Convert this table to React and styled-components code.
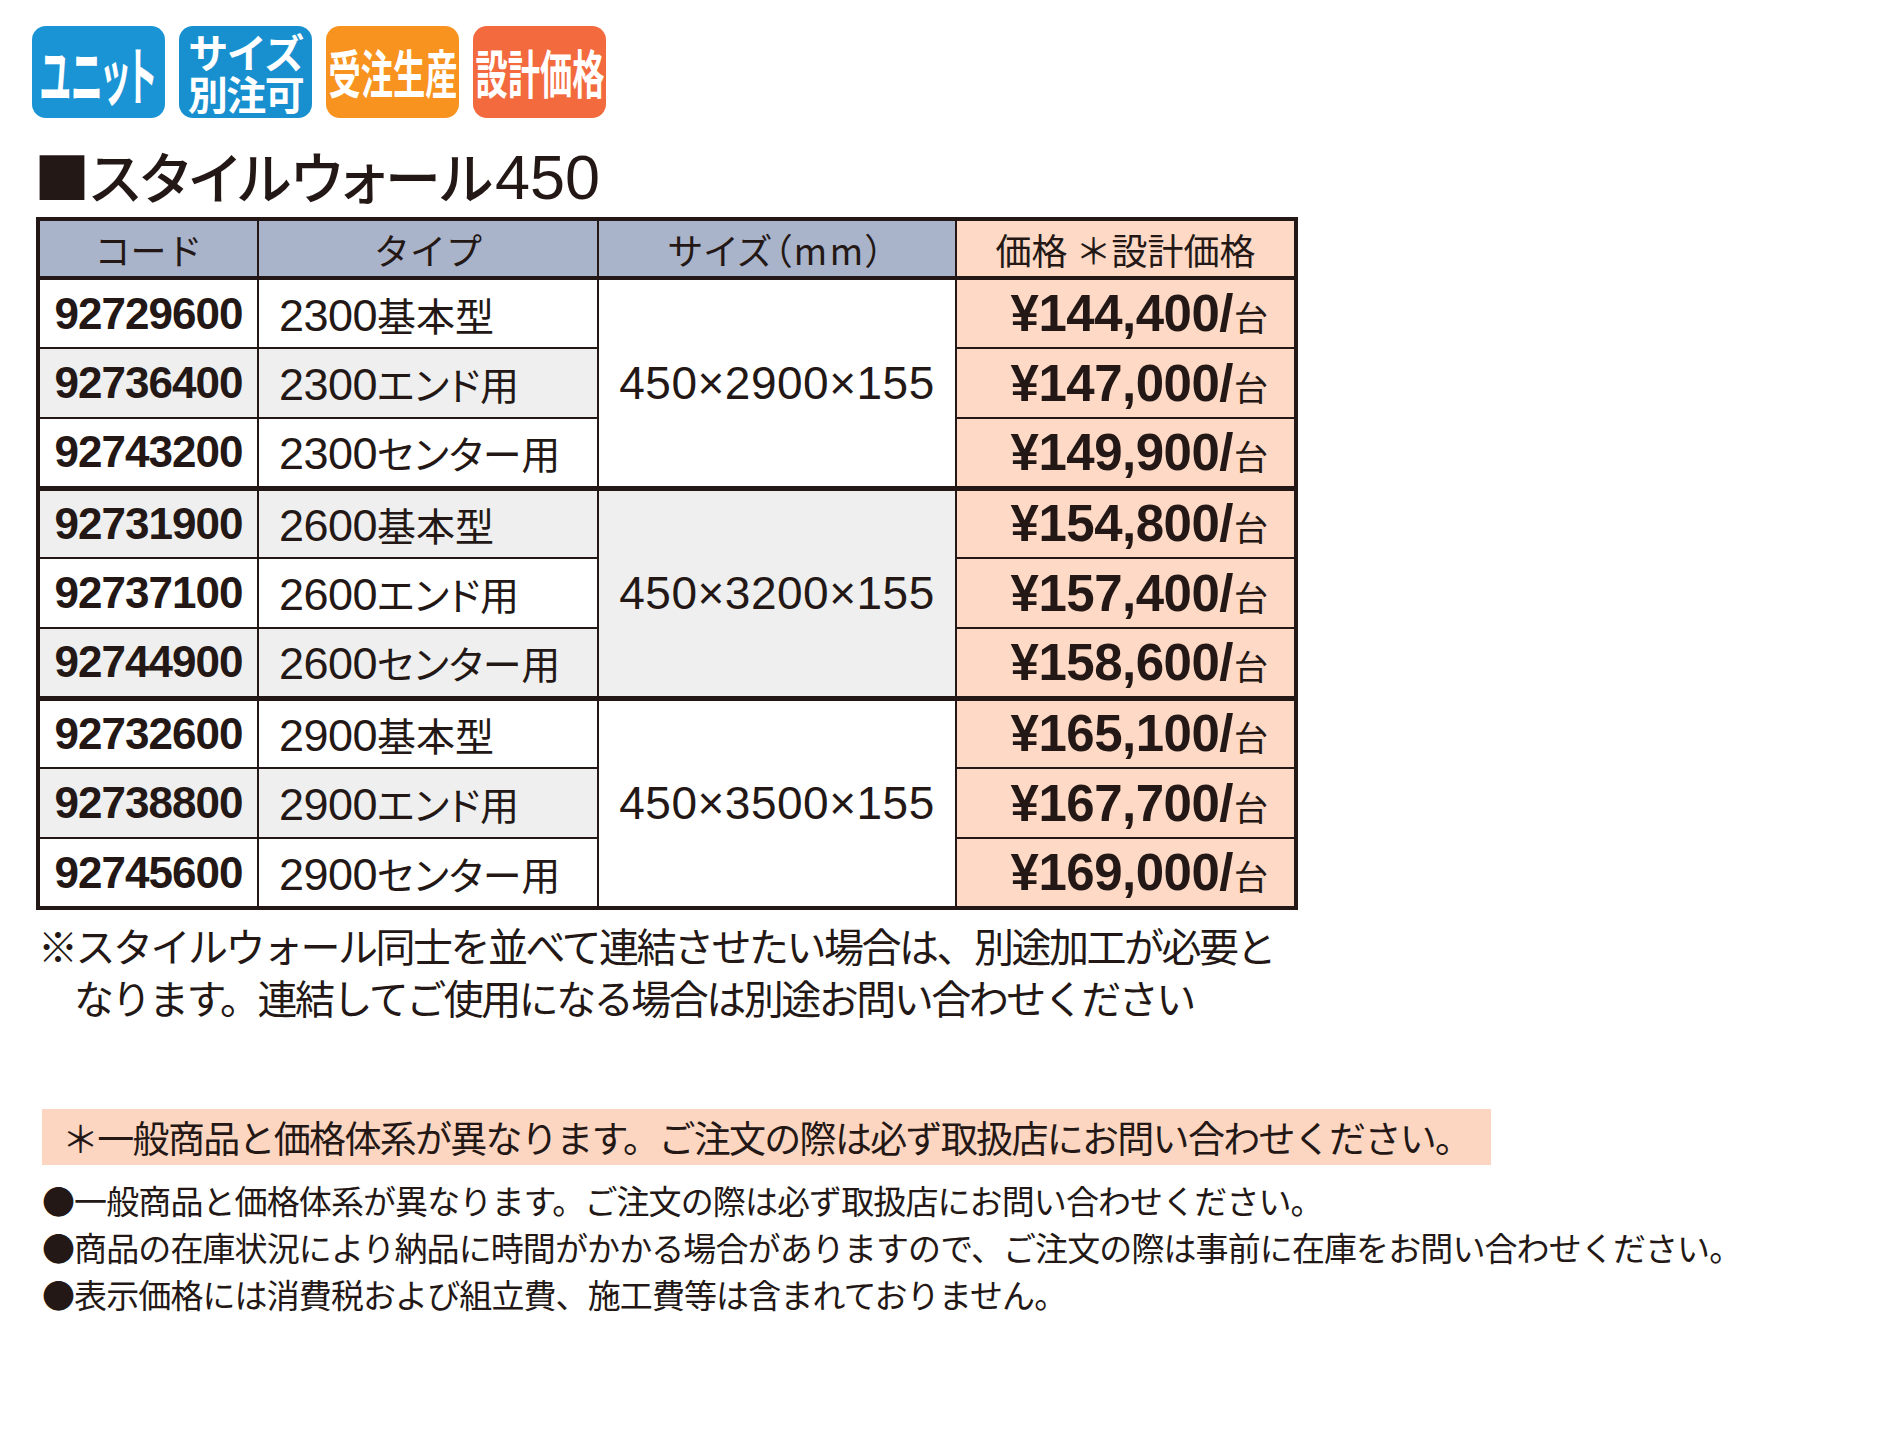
import React from 'react';
import styled, { createGlobalStyle } from 'styled-components';

const INK = '#231815';

const GlobalStyle = createGlobalStyle`
  html, body {
    margin: 0;
    padding: 0;
    background: #ffffff;
  }
  body {
    font-family: "Noto Sans CJK JP", "Noto Sans", sans-serif;
    color: ${INK};
  }
`;

const Page = styled.div`
  width: 1888px;
  min-height: 1436px;
  box-sizing: border-box;
  padding: 26px 0 0 32px;
`;

const BadgeRow = styled.div`
  display: flex;
  gap: 14px;
`;

const Badge = styled.div`
  width: 133px;
  height: 92px;
  border-radius: 14px;
  background: ${props => props.bg};
  color: #fff;
  display: flex;
  flex-direction: column;
  align-items: center;
  justify-content: center;
`;

const Squeezed = styled.span`
  display: inline-block;
  font-weight: 700;
  font-size: ${props => props.size}px;
  line-height: 1;
  white-space: nowrap;
  font-feature-settings: "palt";
  transform: scaleX(${props => props.sx});
`;

const StackLine = styled.span`
  display: block;
  font-weight: 700;
  font-size: 40px;
  line-height: 42px;
  letter-spacing: -1.5px;
  white-space: nowrap;
`;

const Title = styled.h1`
  margin: 24px 0 7px 2px;
  font-size: 56px;
  line-height: 66px;
  font-weight: 500;
  font-feature-settings: "palt";
  white-space: nowrap;
`;

const TitleNum = styled.span`
  font-family: "Liberation Sans", sans-serif;
  font-size: 63px;
  font-weight: 400;
  margin-left: 2px;
`;

const Table = styled.table`
  margin-left: 4px;
  border-collapse: collapse;
  table-layout: fixed;
  border: 4px solid ${INK};
`;

const HeadRow = styled.tr`
  height: 59px;
`;

const HeadCell = styled.th`
  background: ${props => (props.price ? '#fdd9c6' : '#a9b3c9')};
  border-right: 2px solid ${INK};
  border-bottom: 4px solid ${INK};
  font-size: 36px;
  font-weight: 400;
  text-align: center;
  padding: 0;
  white-space: nowrap;
  font-feature-settings: ${props => (props.tight ? '"palt"' : 'normal')};
  letter-spacing: ${props => (props.tight ? '2.5px' : '0')};
`;

const BodyRow = styled.tr`
  height: 70px;
  background: ${props => (props.shade ? '#efefef' : '#ffffff')};
  border-top: ${props => (props.groupStart ? `5px solid ${INK}` : `2px solid ${INK}`)};
`;

const CodeCell = styled.td`
  border-right: 2px solid ${INK};
  font-family: "Liberation Sans", sans-serif;
  font-weight: 700;
  font-size: 44px;
  letter-spacing: -1px;
  text-align: center;
  padding: 0;
`;

const TypeCell = styled.td`
  border-right: 2px solid ${INK};
  font-size: 39px;
  padding: 0 0 0 20px;
  white-space: nowrap;
  font-feature-settings: "palt";
`;

const TypeNum = styled.span`
  font-family: "Liberation Sans", sans-serif;
  font-size: 45px;
  letter-spacing: -0.5px;
`;

const SizeCell = styled.td`
  border-right: 2px solid ${INK};
  font-family: "Liberation Sans", sans-serif;
  font-size: 46px;
  letter-spacing: 0.5px;
  text-align: center;
  padding: 0;
  background: ${props => (props.shade ? '#efefef' : '#ffffff')};
`;

const PriceCell = styled.td`
  background: #fdd9c6;
  text-align: right;
  padding: 0 26px 0 0;
  white-space: nowrap;
`;

const Amount = styled.span`
  font-family: "Liberation Sans", sans-serif;
  font-weight: 700;
  font-size: 51px;
  letter-spacing: -0.5px;
`;

const Unit = styled.span`
  font-size: 34px;
  margin-left: 1px;
`;

const Note = styled.p`
  margin: 9px 0 0 6px;
  padding-left: 36px;
  text-indent: -36px;
  font-size: 40px;
  line-height: 52px;
  letter-spacing: -2.5px;
  white-space: nowrap;
`;

const Banner = styled.div`
  margin: 86px 0 0 10px;
  width: 1449px;
  height: 56px;
  box-sizing: border-box;
  background: #fdd6c2;
  display: flex;
  align-items: center;
  padding-left: 20px;
  font-size: 37px;
  letter-spacing: -1.7px;
  white-space: nowrap;
`;

const BulletList = styled.ul`
  list-style: none;
  margin: 12px 0 0 10px;
  padding: 0;
`;

const Bullet = styled.li`
  font-size: 33px;
  line-height: 47px;
  letter-spacing: -0.9px;
  white-space: nowrap;
`;

const groups = [
  {
    size: '450×2900×155',
    len: '2300',
    rows: [
      ['92729600', '基本型', '¥144,400/'],
      ['92736400', 'エンド用', '¥147,000/'],
      ['92743200', 'センター用', '¥149,900/'],
    ],
  },
  {
    size: '450×3200×155',
    len: '2600',
    rows: [
      ['92731900', '基本型', '¥154,800/'],
      ['92737100', 'エンド用', '¥157,400/'],
      ['92744900', 'センター用', '¥158,600/'],
    ],
  },
  {
    size: '450×3500×155',
    len: '2900',
    rows: [
      ['92732600', '基本型', '¥165,100/'],
      ['92738800', 'エンド用', '¥167,700/'],
      ['92745600', 'センター用', '¥169,000/'],
    ],
  },
];

export default function App() {
  return (
    <>
      <GlobalStyle />
      <Page>
        <BadgeRow>
          <Badge bg="#1a94d4">
            <Squeezed size={64} sx={0.5}>ユニット</Squeezed>
          </Badge>
          <Badge bg="#1890cf">
            <StackLine>サイズ</StackLine>
            <StackLine>別注可</StackLine>
          </Badge>
          <Badge bg="#f7931e">
            <Squeezed size={52} sx={0.62}>受注生産</Squeezed>
          </Badge>
          <Badge bg="#f26a3d">
            <Squeezed size={52} sx={0.62}>設計価格</Squeezed>
          </Badge>
        </BadgeRow>

        <Title>
          ■スタイルウォール<TitleNum>450</TitleNum>
        </Title>

        <Table>
          <colgroup>
            <col style={{ width: 220 }} />
            <col style={{ width: 340 }} />
            <col style={{ width: 358 }} />
            <col style={{ width: 340 }} />
          </colgroup>
          <thead>
            <HeadRow>
              <HeadCell>コード</HeadCell>
              <HeadCell>タイプ</HeadCell>
              <HeadCell tight>サイズ（mm）</HeadCell>
              <HeadCell price>価格 ＊設計価格</HeadCell>
            </HeadRow>
          </thead>
          <tbody>
            {groups.map((g, gi) =>
              g.rows.map((r, ri) => {
                const idx = gi * 3 + ri;
                return (
                  <BodyRow key={r[0]} shade={idx % 2 === 1} groupStart={ri === 0 && gi > 0}>
                    <CodeCell>{r[0]}</CodeCell>
                    <TypeCell>
                      <TypeNum>{g.len}</TypeNum>
                      {r[1]}
                    </TypeCell>
                    {ri === 0 && (
                      <SizeCell rowSpan={3} shade={gi === 1}>
                        {g.size}
                      </SizeCell>
                    )}
                    <PriceCell>
                      <Amount>{r[2]}</Amount>
                      <Unit>台</Unit>
                    </PriceCell>
                  </BodyRow>
                );
              })
            )}
          </tbody>
        </Table>

        <Note>
          ※スタイルウォール同士を並べて連結させたい場合は、別途加工が必要と
          <br />
          なります。連結してご使用になる場合は別途お問い合わせください
        </Note>

        <Banner>＊一般商品と価格体系が異なります。ご注文の際は必ず取扱店にお問い合わせください。</Banner>

        <BulletList>
          <Bullet>●一般商品と価格体系が異なります。ご注文の際は必ず取扱店にお問い合わせください。</Bullet>
          <Bullet>●商品の在庫状況により納品に時間がかかる場合がありますので、ご注文の際は事前に在庫をお問い合わせください。</Bullet>
          <Bullet>●表示価格には消費税および組立費、施工費等は含まれておりません。</Bullet>
        </BulletList>
      </Page>
    </>
  );
}
